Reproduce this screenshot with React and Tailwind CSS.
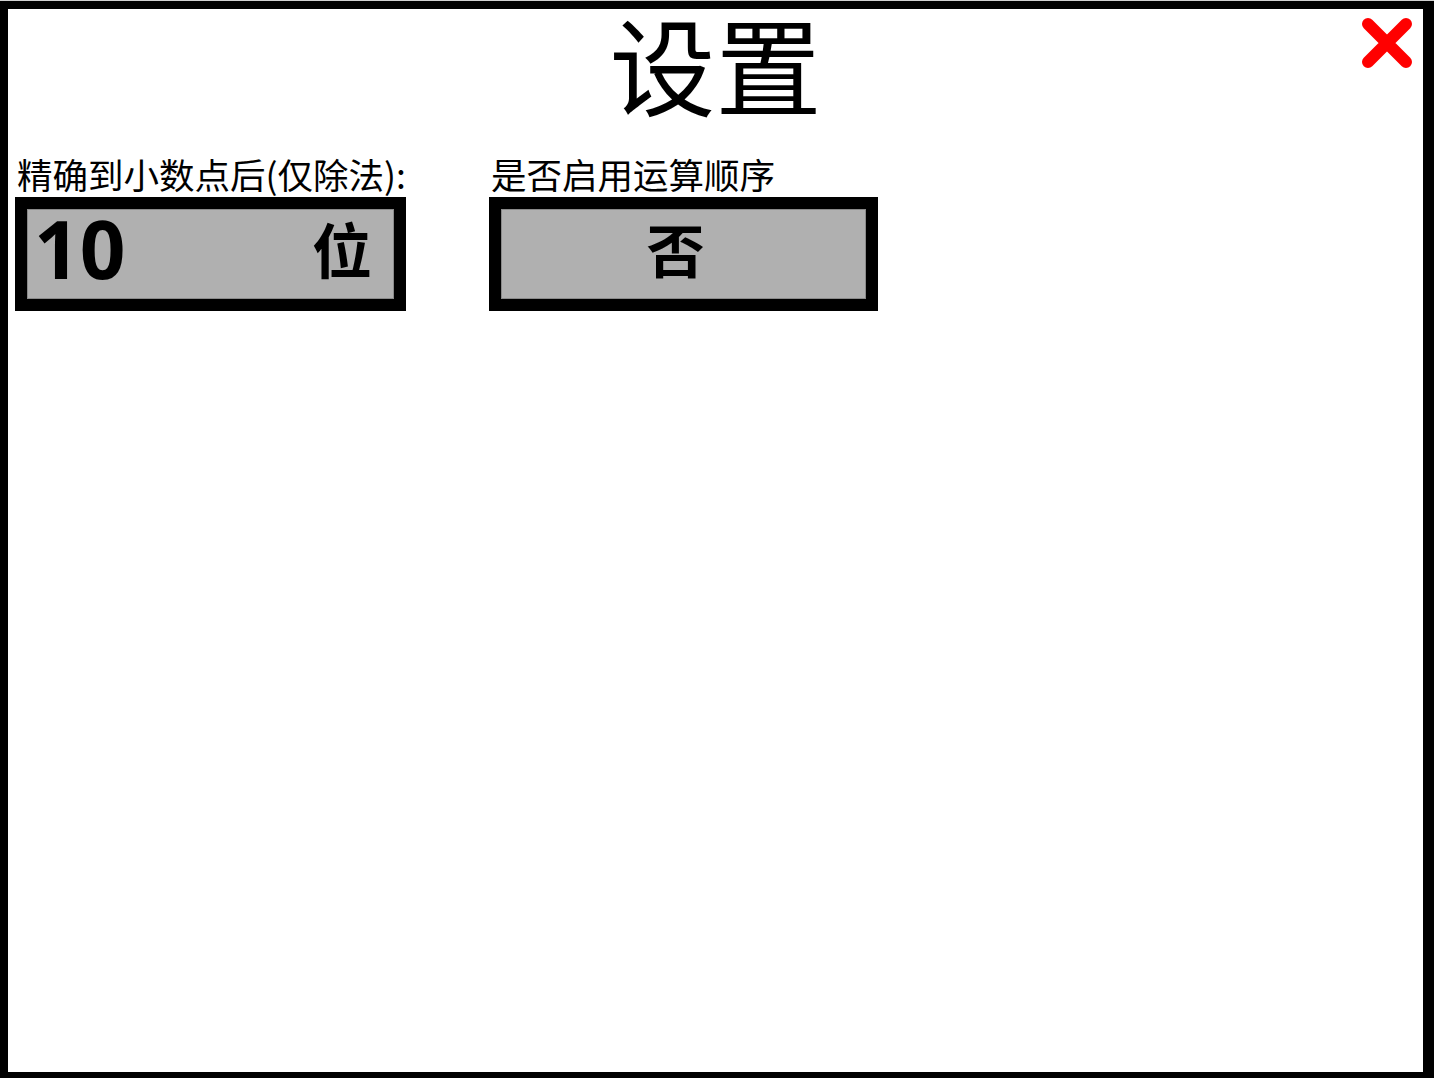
import React from "react";

const cjk = { fontFamily: '"Noto Sans CJK SC", "Noto Sans", sans-serif' };
const num = { fontFamily: '"Noto Sans", "Noto Sans CJK SC", sans-serif' };

export default function App() {
  return (
    <div className="w-[1434px] h-[1078px] bg-[#d0d0d0] pt-px overflow-hidden">
      <div className="relative w-[1434px] h-[1077px] bg-white border-l-[8px] border-t-[8px] border-r-[11px] border-b-[6px] border-black">
        <div className="flex justify-center">
          <h1 className="text-[106px] leading-none text-black pb-[4px]" style={cjk}>设置</h1>
        </div>
        <svg className="absolute left-[1353px] top-[8px]" width="52" height="52" viewBox="0 0 52 52">
          <path d="M7 7 L45 45 M45 7 L7 45" stroke="#ff0000" strokeWidth="12" strokeLinecap="round" fill="none" />
        </svg>
        <div className="flex gap-[83px] pl-[7px] mt-[37px]">
          <div className="flex flex-col w-[391px]">
            <div className="text-[35.5px] leading-none text-black pl-[2px] h-[41px] whitespace-nowrap" style={cjk}>精确到小数点后(仅除法):</div>
            <div className="w-[391px] h-[114px] border-[12px] border-black bg-[#b0b0b0] shadow-[inset_0_0_0_1px_#8a8a8a] flex items-center justify-between pl-[7px] pr-[22px] pb-[12px]">
              <span className="text-[80px] font-bold leading-none text-black" style={num}>10</span>
              <span className="text-[60px] font-bold leading-none text-black" style={cjk}>位</span>
            </div>
          </div>
          <div className="flex flex-col w-[389px]">
            <div className="text-[35.5px] leading-none text-black pl-[2px] h-[41px] whitespace-nowrap" style={cjk}>是否启用运算顺序</div>
            <div className="w-[389px] h-[114px] border-[12px] border-black bg-[#b0b0b0] shadow-[inset_0_0_0_1px_#8a8a8a] flex items-center justify-center pr-[16px] pb-[12px]">
              <span className="text-[58px] font-bold leading-none text-black" style={cjk}>否</span>
            </div>
          </div>
        </div>
      </div>
    </div>
  );
}
